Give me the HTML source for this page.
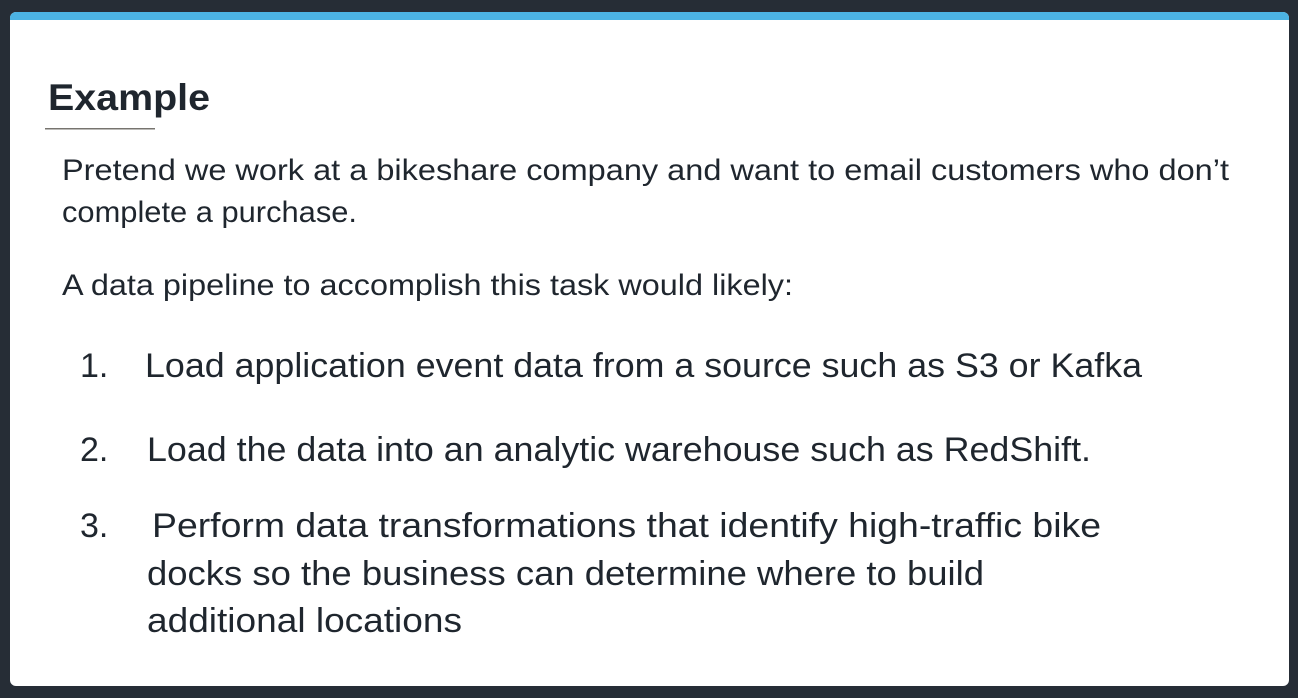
<!DOCTYPE html>
<html><head><meta charset="utf-8"><style>
html,body{margin:0;padding:0;background:#262d36;width:1298px;height:698px;overflow:hidden}
svg{display:block}
text{font-family:"Liberation Sans",sans-serif;fill:#1f262e}
</style></head><body>
<svg width="1298" height="698" xmlns="http://www.w3.org/2000/svg">
<rect x="0" y="0" width="1298" height="698" fill="#262d36"/>
<rect x="10" y="12" width="1279" height="674" rx="6" fill="#ffffff"/>
<path d="M10 20 V18 a6 6 0 0 1 6 -6 H1283 a6 6 0 0 1 6 6 V20 Z" fill="#4cb3e3"/>
<text x="48" y="110" font-size="37" font-weight="bold" textLength="162" lengthAdjust="spacingAndGlyphs">Example</text>
<rect x="45" y="128" width="110" height="1.5" fill="#77746f"/>
<text x="62" y="180" font-size="29.5" textLength="1167" lengthAdjust="spacingAndGlyphs">Pretend we work at a bikeshare company and want to email customers who don’t</text>
<text x="62" y="222" font-size="29.5" textLength="295" lengthAdjust="spacingAndGlyphs">complete a purchase.</text>
<text x="62" y="295" font-size="29.5" textLength="731" lengthAdjust="spacingAndGlyphs">A data pipeline to accomplish this task would likely:</text>
<text x="80" y="377" font-size="34">1.</text>
<text x="145" y="377" font-size="34" textLength="997" lengthAdjust="spacingAndGlyphs">Load application event data from a source such as S3 or Kafka</text>
<text x="80" y="461" font-size="34">2.</text>
<text x="147" y="461" font-size="34" textLength="944" lengthAdjust="spacingAndGlyphs">Load the data into an analytic warehouse such as RedShift.</text>
<text x="80" y="537" font-size="34">3.</text>
<text x="152" y="537" font-size="34" textLength="949" lengthAdjust="spacingAndGlyphs">Perform data transformations that identify high-traffic bike</text>
<text x="147" y="585" font-size="34" textLength="837" lengthAdjust="spacingAndGlyphs">docks so the business can determine where to build</text>
<text x="147" y="632" font-size="34" textLength="315" lengthAdjust="spacingAndGlyphs">additional locations</text>
</svg>
</body></html>
